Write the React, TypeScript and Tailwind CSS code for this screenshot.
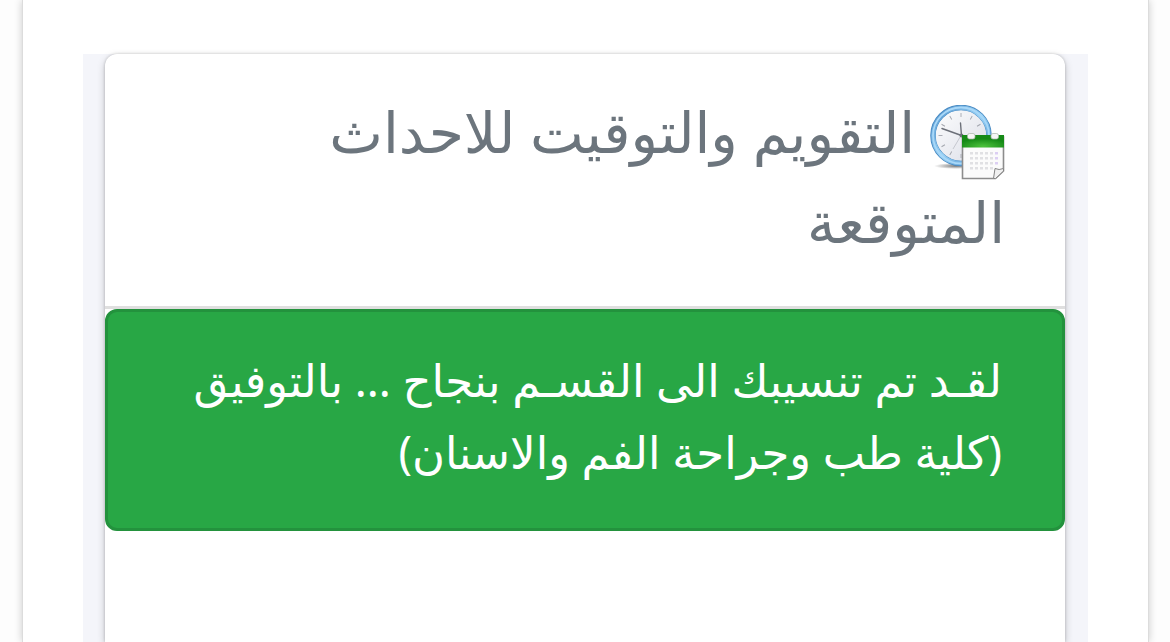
import React from "react";

const ticks = Array.from({ length: 12 }, (_, i) => i * 30);
const columns = [50, 55, 60, 65, 70, 75];
const rows = [57, 62, 67, 72];

function CalendarClockIcon() {
  return (
    <svg viewBox="10 10 75 75" className="-mb-2 inline-block size-[75px] align-[-19px]" aria-hidden="true">
      <defs>
        <linearGradient id="rim" x1="0" y1="0" x2="1" y2="1">
          <stop offset="0" stopColor="#4f91cb" />
          <stop offset="0.5" stopColor="#9bd3f7" />
          <stop offset="1" stopColor="#4389c8" />
        </linearGradient>
        <linearGradient id="face" x1="0" y1="0" x2="1" y2="1">
          <stop offset="0" stopColor="#ffffff" />
          <stop offset="1" stopColor="#d9dce6" />
        </linearGradient>
        <radialGradient id="band" cx="0.5" cy="0.9" r="0.6">
          <stop offset="0" stopColor="#4cc23c" />
          <stop offset="1" stopColor="#168a17" />
        </radialGradient>
        <radialGradient id="shade">
          <stop offset="0" stopColor="#555" stopOpacity="0.8" />
          <stop offset="1" stopColor="#555" stopOpacity="0" />
        </radialGradient>
      </defs>

      {/* clock */}
      <ellipse cx="36" cy="71" rx="22" ry="3" fill="url(#shade)" />
      <circle cx="41" cy="40.500" r="28" fill="url(#face)" />
      <circle cx="41" cy="40.500" r="28" fill="none" stroke="#4285bf" strokeWidth="5.500" />
      <circle cx="41" cy="40.500" r="27.800" fill="none" stroke="url(#rim)" strokeWidth="4.400" />
      <circle cx="41" cy="40.500" r="28" fill="none" stroke="#a9d8f8" strokeWidth="1.800" />
      {ticks.map((angle) => (
        <path
          key={angle}
          d="M41 18v4"
          stroke="#a3a6ae"
          strokeWidth="0.900"
          transform={`rotate(${angle} 41 40.500)`}
        />
      ))}
      <path d="M22 33.500 41.500 40.500" stroke="#6c7079" strokeWidth="1.500" strokeLinecap="round" />
      <path d="M40.500 28 41.500 41" stroke="#6c7079" strokeWidth="1.400" strokeLinecap="round" />
      <path d="M41 40.500 33 54" stroke="#b5b8c0" strokeWidth="0.700" />
      <circle cx="41.500" cy="40.500" r="2" fill="#6d717a" />

      {/* calendar page */}
      <path d="M42.500 42h41v34l-8 7.500h-33z" fill="#fbfbfb" stroke="#8c8c8c" strokeWidth="1.600" />
      <path d="M42 40h42v12.500H42z" fill="url(#band)" />
      <rect x="47.500" y="38.500" width="7.500" height="5.500" rx="2" fill="#f6f6f6" stroke="#a9b5a9" strokeWidth="0.700" />
      <rect x="71" y="38.500" width="7.500" height="5.500" rx="2" fill="#f6f6f6" stroke="#a9b5a9" strokeWidth="0.700" />
      {rows.map((y) =>
        columns.map((x) => (
          <rect
            key={`${x}-${y}`}
            x={x}
            y={y}
            width="3"
            height="2.500"
            fill={x === 75 ? "#dccff3" : "#e0e0e3"}
            opacity={x === 75 && y === 72 ? 0 : 1}
          />
        )),
      )}
      <path d="M73.500 83.500 75 73.500q4 2 8.500 0v2.500l-8 7.500z" fill="#f0f0f0" stroke="#858585" strokeWidth="1" />
    </svg>
  );
}

function App() {
  return (
    <div
      dir="rtl"
      lang="ar"
      className="flex min-h-screen overflow-hidden bg-[#fdfdfd] pr-[21px] pl-[22px] font-['Noto_Sans','DejaVu_Sans',sans-serif]"
    >
      <main className="flex flex-1 border-x border-[#dcdcdc] bg-white px-[60px] pt-[54px] shadow-[0_0_8px_rgba(0,0,0,0.2)]">
        <div className="flex flex-1 bg-[#f4f5fa] pr-[23px] pl-[22px]">
          <section className="flex-1 rounded-t-xl bg-white shadow-[0_0_3px_rgba(0,0,0,0.2),0_3px_9px_rgba(0,0,0,0.2)]">
            <header className="border-b-3 border-[#dfdfdf] px-[60px] pt-8 pb-10">
              <h1 className="text-[57px] leading-[90px] text-[#6c757d]">
                <CalendarClockIcon /> التقويم والتوقيت للاحداث المتوقعة
              </h1>
            </header>
            <div
              role="alert"
              className="rounded-xl border-3 border-[#23923d] bg-[#28a745] px-[60px] pt-8 pb-10 text-[45px] leading-[72px] text-white"
            >
              <p>لقـد تم تنسيبك الى القسـم بنجاح ... بالتوفيق</p>
              <p>(كلية طب وجراحة الفم والاسنان)</p>
            </div>
          </section>
        </div>
      </main>
    </div>
  );
}

export default App;
